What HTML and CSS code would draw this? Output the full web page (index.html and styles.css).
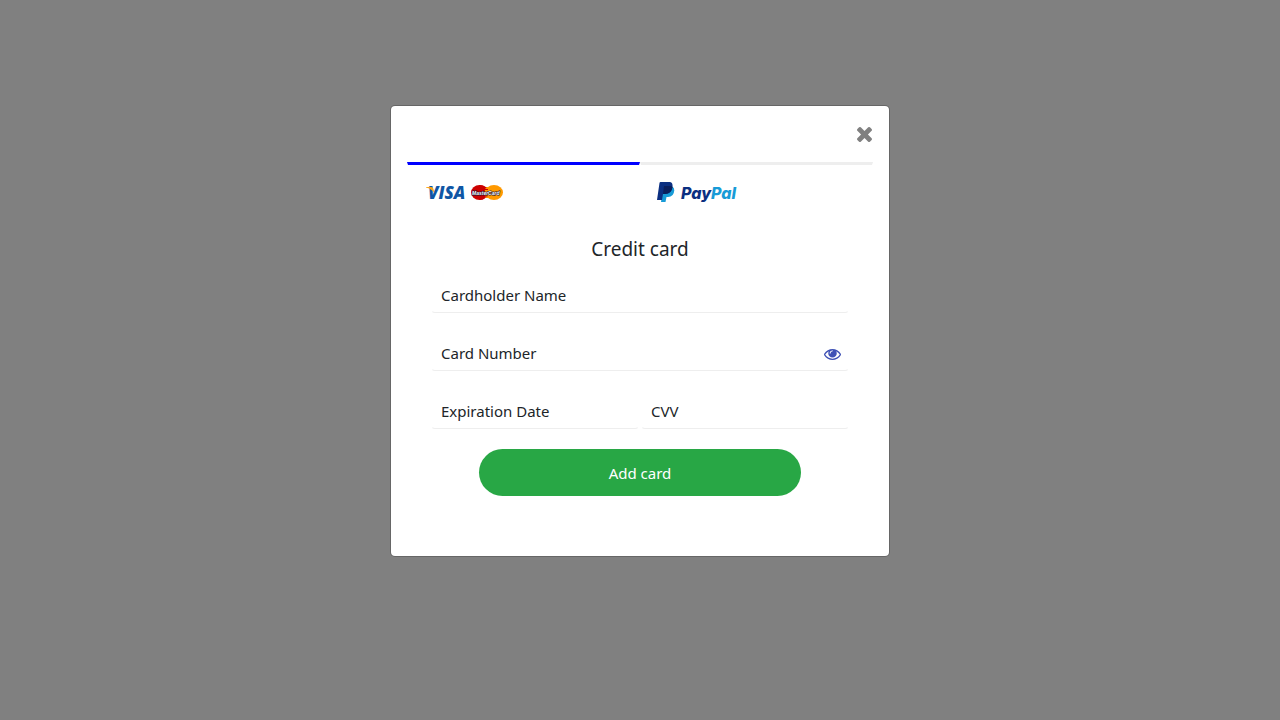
FILE: index.html
```html
<!DOCTYPE html>
<html lang="en">
<head>
<meta charset="utf-8">
<meta name="viewport" content="width=device-width, initial-scale=1">
<title>Add payment method</title>
<link rel="stylesheet" href="styles.css">
</head>
<body>
<main class="backdrop">
  <section class="modal" role="dialog" aria-modal="true" aria-labelledby="modal-title">
    <header class="modal-header">
      <button class="close" type="button" aria-label="Close">
        <svg class="close-icon" viewBox="302 366 1188 1188" aria-hidden="true"><path d="M1490 1322q0 40-28 68l-136 136q-28 28-68 28t-68-28l-294-294-294 294q-28 28-68 28t-68-28l-136-136q-28-28-28-68t28-68l294-294-294-294q-28-28-28-68t28-68l136-136q28-28 68-28t68 28l294 294 294-294q28-28 68-28t68 28l136 136q28 28 28 68t-28 68l-294 294 294 294q28 28 28 68z"/></svg>
      </button>
    </header>
    <nav class="tabs" role="tablist">
      <button class="tab tab-active" type="button" role="tab" aria-selected="true" aria-label="Credit card">
        <svg class="brand" width="80" height="24" viewBox="0 0 80 24">
          <text class="visa" x="2" y="18">VISA</text>
          <path fill="#f9a51a" d="M0 6h5.200q1.800 0 2.200 1.800l1 4.200Q5.500 8 0 6.600z"/>
          <ellipse cx="53.500" cy="11.500" rx="8.500" ry="7.500" fill="#c00"/>
          <ellipse cx="68" cy="11.500" rx="9" ry="7.500" fill="#f90"/>
          <path fill="#f90" d="M60 6h8v11h-8q-3-5 0-11z"/>
          <path fill="#c00" d="M53 4q5 0 8 3h-2.500v1h3.500v1h-3.500v5.500h3v1h-2.500v1h1Q57 19 53 19z"/>
          <text class="mastercard" x="46" y="14">MasterCard</text>
        </svg>
      </button>
      <button class="tab" type="button" role="tab" aria-selected="false" aria-label="PayPal">
        <svg class="brand" width="84" height="24" viewBox="0 0 84 24">
          <path fill="#179bd7" d="M15 5.500q2.500 1 2.300 4-.6 6.500-6.300 6.500H9.500l-1 5H4l2-13z"/>
          <path fill="#0b2f81" d="M3.500 1H13q3 .5 2.500 5-1 7-7.500 7H6L5 19H0L2.500 2q.1-1 1-1z"/>
          <path fill="#0a1f5c" d="M7 5h7q1.500.3 1.400 1.500-.9 6.500-7.400 6.500H6z"/>
          <text class="paypal" x="24" y="18"><tspan class="pay">Pay</tspan><tspan class="pal">Pal</tspan></text>
        </svg>
      </button>
    </nav>
    <form class="card-form">
      <h1 class="title" id="modal-title">Credit card</h1>
      <input class="field" type="text" aria-label="Cardholder Name" placeholder="Cardholder Name">
      <div class="number">
        <input class="field" type="text" inputmode="numeric" aria-label="Card Number" placeholder="Card Number">
        <button class="reveal" type="button" aria-label="Show card number">
          <svg class="eye" viewBox="0 384 1792 1152" aria-hidden="true"><path d="M1664 960q-152-236-381-353 61 104 61 225 0 185-131.5 316.5t-316.5 131.5-316.5-131.5-131.5-316.5q0-121 61-225-229 117-381 353 133 205 333.5 326.5t434.5 121.5 434.5-121.5 333.5-326.5zm-720-384q0-20-14-34t-34-14q-125 0-214.5 89.5t-89.5 214.5q0 20 14 34t34 14 34-14 14-34q0-86 61-147t147-61q20 0 34-14t14-34zm848 384q0 34-20 69-140 230-376.500 368.500t-499.500 138.500-499.500-139-376.500-368q-20-35-20-69t20-69q140-229 376.500-368t499.500-139 499.500 139 376.500 368q20 35 20 69z"/></svg>
        </button>
      </div>
      <div class="pair">
        <input class="field" type="text" aria-label="Expiration Date" placeholder="Expiration Date">
        <input class="field" type="text" inputmode="numeric" aria-label="CVV" placeholder="CVV">
      </div>
      <button class="submit" type="submit">Add card</button>
    </form>
  </section>
</main>
</body>
</html>
```
FILE: styles.css
```css
* {
  box-sizing: border-box;
}

body {
  margin: 0;
  background: #808080;
  color: #212529;
  font-family: "Segoe UI", "Noto Sans", sans-serif;
  font-size: 15px;
  line-height: 24px;
}

button,
input {
  font: inherit;
  color: inherit;
}

button {
  border: 0;
  padding: 0;
  background: none;
  cursor: pointer;
}

svg {
  display: block;
}

.backdrop {
  min-height: 100vh;
  padding: 105px 16px 16px;
}

.modal {
  max-width: 500px;
  margin: 0 auto;
  padding: 0 16px 60px;
  background: #fff;
  background-clip: padding-box;
  border: 1px solid rgba(0, 0, 0, 0.2);
  border-radius: 5px;
}

.modal-header {
  display: flex;
  justify-content: flex-end;
  padding: 20px 1px;
}

.close {
  height: 16px;
}

.close-icon {
  width: 15px;
  height: 15px;
  fill: #808080;
}

.tabs {
  display: grid;
  grid-template-columns: 1fr 1fr;
}

.tab {
  padding: 16px 16px 15px;
  border: 1px solid transparent;
  border-top: 3px solid #eee;
}

.tab-active {
  border-top-color: #00f;
  padding-left: 18px;
}

.visa {
  fill: #0f56a5;
  font: italic 800 17px "Open Sans", sans-serif;
}

.mastercard {
  fill: #fff;
  stroke: #113;
  stroke-width: 1px;
  paint-order: stroke;
  font: italic bold 5px "Liberation Sans", sans-serif;
}

.paypal {
  font: italic 800 16px Inter, sans-serif;
}

.pay {
  fill: #0b2f81;
}

.pal {
  fill: #179bd7;
}

.card-form {
  display: flex;
  flex-direction: column;
  gap: 20px;
  padding: 16px 24px 0;
}

.title {
  margin: 0 0 -6px;
  font-size: 19px;
  font-weight: 400;
  line-height: 24px;
  text-align: center;
}

.field {
  width: 100%;
  height: 38px;
  min-width: 0;
  padding: 1px 9px 0;
  border: 1px solid transparent;
  border-bottom-color: #eee;
  border-radius: 4px;
  background: none;
}

.field::placeholder {
  color: #212529;
  opacity: 1;
}

.number {
  position: relative;
}

.reveal {
  position: absolute;
  right: 8px;
  bottom: 11px;
}

.eye {
  width: 17px;
  height: 11px;
  fill: #3f51b5;
}

.pair {
  display: flex;
  gap: 2px;
}

.submit {
  align-self: center;
  width: 100%;
  max-width: 322px;
  height: 47px;
  border-radius: 24px;
  background: #28a745;
  color: #fff;
}
```
